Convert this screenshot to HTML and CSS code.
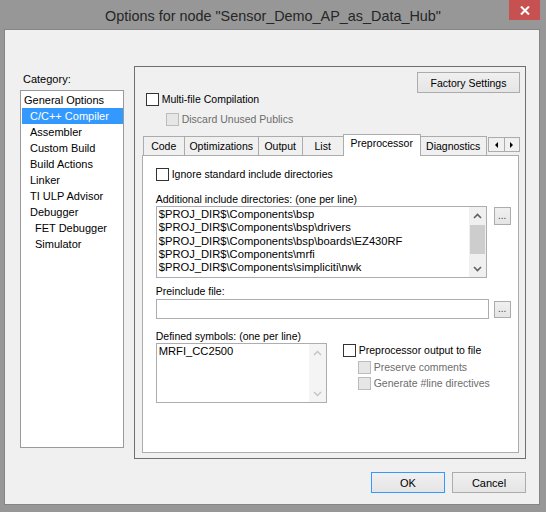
FILE: index.html
```html
<!DOCTYPE html>
<html>
<head>
<meta charset="utf-8">
<link rel="stylesheet" href="styles.css">
</head>
<body>
<div class="window">
  <div class="titlebar">
    <div class="title">Options for node "Sensor_Demo_AP_as_Data_Hub"</div>
    <div class="close"><svg width="10" height="9" viewBox="0 0 10 9"><path d="M1 0.5 L9 8.5 M9 0.5 L1 8.5" stroke="#fff" stroke-width="2"/></svg></div>
  </div>
  <div class="client">
    <div class="main">
      <div class="catcol">
        <div class="catlabel">Category:</div>
        <div class="catlist">
          <div class="item">General Options</div>
          <div class="item l1 sel">C/C++ Compiler</div>
          <div class="item l1">Assembler</div>
          <div class="item l1">Custom Build</div>
          <div class="item l1">Build Actions</div>
          <div class="item l1">Linker</div>
          <div class="item l1">TI ULP Advisor</div>
          <div class="item l1">Debugger</div>
          <div class="item l2">FET Debugger</div>
          <div class="item l2">Simulator</div>
        </div>
      </div>
      <div class="panel">
        <div class="factory-row"><div class="btn factory">Factory Settings</div></div>
        <div class="chk multi"><span class="box"></span><span>Multi-file Compilation</span></div>
        <div class="chk discard disabled"><span class="box"></span><span>Discard Unused Publics</span></div>
        <div class="tabstrip">
          <div class="tab w-code">Code</div>
          <div class="tab w-opt">Optimizations</div>
          <div class="tab w-out">Output</div>
          <div class="tab w-list">List</div>
          <div class="tab sel w-pre">Preprocessor</div>
          <div class="tab w-diag">Diagnostics</div>
          <div class="tabarrows">
            <div class="arr"><span class="tri-l"></span></div>
            <div class="arr"><span class="tri-r"></span></div>
          </div>
        </div>
        <div class="tabpage">
          <div class="chk ignore"><span class="box"></span><span>Ignore standard include directories</span></div>
          <div class="label lbl-incl">Additional include directories: (one per line)</div>
          <div class="inclrow">
            <div class="listbox incl">
              <div class="lines">
                <div>$PROJ_DIR$\Components\bsp</div>
                <div>$PROJ_DIR$\Components\bsp\drivers</div>
                <div>$PROJ_DIR$\Components\bsp\boards\EZ430RF</div>
                <div>$PROJ_DIR$\Components\mrfi</div>
                <div>$PROJ_DIR$\Components\simpliciti\nwk</div>
              </div>
              <div class="scroll">
                <div class="sbtn"><svg width="9" height="6" viewBox="0 0 9 6"><path d="M1 5 L4.5 1.5 L8 5" fill="none" stroke="#606060" stroke-width="1.6"/></svg></div>
                <div class="thumb"></div>
                <div class="sfill"></div>
                <div class="sbtn"><svg width="9" height="6" viewBox="0 0 9 6"><path d="M1 1 L4.5 4.5 L8 1" fill="none" stroke="#606060" stroke-width="1.6"/></svg></div>
              </div>
            </div>
            <div class="btn dots d1">...</div>
          </div>
          <div class="label lbl-pre">Preinclude file:</div>
          <div class="prerow">
            <div class="field"></div>
            <div class="btn dots d2">...</div>
          </div>
          <div class="label lbl-def">Defined symbols: (one per line)</div>
          <div class="symrow">
            <div class="listbox sym">
              <div class="lines"><div>MRFI_CC2500</div></div>
              <div class="scroll off">
                <div class="sbtn"><svg width="9" height="6" viewBox="0 0 9 6"><path d="M1 5 L4.5 1.5 L8 5" fill="none" stroke="#c4c4c4" stroke-width="1.4"/></svg></div>
                <div class="sfill"></div>
                <div class="sbtn"><svg width="9" height="6" viewBox="0 0 9 6"><path d="M1 1 L4.5 4.5 L8 1" fill="none" stroke="#c4c4c4" stroke-width="1.4"/></svg></div>
              </div>
            </div>
            <div class="ppopts">
              <div class="chk ppout"><span class="box"></span><span>Preprocessor output to file</span></div>
              <div class="chk disabled preserve"><span class="box"></span><span>Preserve comments</span></div>
              <div class="chk disabled genline"><span class="box"></span><span>Generate #line directives</span></div>
            </div>
          </div>
        </div>
      </div>
    </div>
    <div class="buttons">
      <div class="btn ok">OK</div>
      <div class="btn cancel">Cancel</div>
    </div>
  </div>
</div>
</body>
</html>
```

FILE: styles.css
```css
body {
  margin: 0;
  background: #979797;
  font-family: "Liberation Sans", Arial, sans-serif;
}
.window {
  width: 546px;
  height: 512px;
}
.titlebar {
  height: 29px;
  display: flex;
  align-items: flex-start;
}
.title {
  flex: 1;
  padding-left: 37px;
  padding-top: 6px;
  line-height: 20px;
  font-size: 14.4px;
  color: #262626;
  text-align: center;
  white-space: nowrap;
}
.close {
  width: 31px;
  height: 20px;
  margin-right: 6px;
  background: #c75050;
  display: flex;
  align-items: center;
  justify-content: center;
}
.client {
  margin-left: 4px;
  width: 536px;
  height: 476px;
  box-sizing: border-box;
  border: 1px solid #858585;
  background: #f0f0f0;
  padding: 36px 13px 0 15px;
  display: flex;
  flex-direction: column;
  font-size: 10.5px;
  color: #000;
}
.main {
  display: flex;
  gap: 10px;
  align-items: flex-start;
}
.catcol {
  width: 105px;
}
.catlabel {
  padding-top: 6px;
  height: 14px;
  line-height: 14px;
  margin-bottom: 4px;
  font-size: 11px;
  padding-left: 3px;
}
.catlist {
  height: 358px;
  box-sizing: border-box;
  border: 1px solid #9a9a9a;
  background: #fff;
  padding-top: 1px;
}
.item {
  height: 16px;
  line-height: 16px;
  margin-left: 1px;
  padding-left: 2px;
  font-size: 11px;
  white-space: nowrap;
}
.item.l1 { padding-left: 8px; }
.item.l2 { padding-left: 13px; }
.item.sel {
  background: #3399ff;
  color: #fff;
}
.panel {
  width: 397px;
  height: 393px;
  box-sizing: border-box;
  border: 1px solid #6f6f6f;
  padding: 5px 5px 5px 7px;
  display: flex;
  flex-direction: column;
}
.factory-row {
  display: flex;
  justify-content: flex-end;
}
.btn {
  box-sizing: border-box;
  height: 21px;
  border: 1px solid #acacac;
  background: linear-gradient(#f0f0f0, #e5e5e5);
  display: flex;
  align-items: center;
  justify-content: center;
  font-size: 10.5px;
  color: #000;
  white-space: nowrap;
}
.factory { width: 103px; }
.chk {
  display: flex;
  align-items: center;
  height: 13px;
  line-height: 13px;
  white-space: nowrap;
}
.box {
  width: 13px;
  height: 13px;
  box-sizing: border-box;
  border: 1px solid #333;
  background: #fff;
  margin-right: 3px;
  flex: none;
}
.disabled { color: #6d6d6d; }
.disabled .box {
  border-color: #bcbcbc;
  background: #e6e6e6;
}
.multi { margin-left: 4px; }
.discard { margin-left: 24px; margin-top: 7px; }
.tabstrip {
  display: flex;
  align-items: flex-end;
  height: 21px;
  margin-top: 8px;
  padding-left: 1px;
}
.tab {
  height: 19px;
  box-sizing: border-box;
  border: 1px solid #acacac;
  border-bottom: none;
  margin-right: -1px;
  text-align: center;
  line-height: 18px;
  background: #f0f0f0;
  white-space: nowrap;
  flex: none;
}
.tab.sel {
  height: 22px;
  margin-bottom: -1px;
  background: #fff;
  position: relative;
  z-index: 2;
  line-height: 17px;
}
.w-code { width: 42px; }
.w-opt { width: 75px; }
.w-out { width: 45px; }
.w-list { width: 42px; }
.w-pre { width: 78px; }
.w-diag { width: 67px; }
.tabarrows {
  margin-left: auto;
  align-self: flex-start;
  margin-top: 3px;
  width: 32px;
  height: 15px;
  box-sizing: border-box;
  border: 1px solid #acacac;
  background: #f0f0f0;
  display: flex;
}
.arr {
  flex: 1;
  display: flex;
  align-items: center;
  justify-content: center;
}
.arr + .arr { border-left: 1px solid #acacac; }
.tri-l {
  width: 0; height: 0;
  border-top: 3px solid transparent;
  border-bottom: 3px solid transparent;
  border-right: 3px solid #000;
}
.tri-r {
  width: 0; height: 0;
  border-top: 3px solid transparent;
  border-bottom: 3px solid transparent;
  border-left: 3px solid #000;
}
.tabpage {
  flex: 1;
  margin-right: 1px;
  border: 1px solid #acacac;
  background: #fff;
  padding: 12px 0 0 13px;
  display: flex;
  flex-direction: column;
}
.label {
  height: 14px;
  line-height: 14px;
  white-space: nowrap;
}
.lbl-incl { margin-top: 11px; }
.lbl-pre { margin-top: 6px; }
.lbl-def { margin-top: 10px; }
.inclrow {
  display: flex;
  gap: 7px;
  align-items: flex-start;
}
.listbox {
  box-sizing: border-box;
  border: 1px solid #abadb3;
  background: #fff;
  display: flex;
}
.listbox.incl { width: 331px; height: 72px; }
.listbox.sym { width: 171px; height: 60px; }
.lines {
  flex: 1;
  padding: 1px 0 0 2px;
  font-size: 11.2px;
  line-height: 13.3px;
  white-space: nowrap;
  overflow: hidden;
}
.scroll {
  width: 17px;
  background: #f0f0f0;
  display: flex;
  flex-direction: column;
}
.scroll.off { background: #f4f4f4; }
.sbtn {
  height: 17px;
  display: flex;
  align-items: center;
  justify-content: center;
}
.thumb {
  height: 29px;
  margin: 1px 1px 0 1px;
  background: #cdcdcd;
}
.sfill { flex: 1; }
.dots {
  width: 17px;
  font-size: 10px;
  color: #444;
  align-items: flex-end;
  padding-bottom: 3px;
}
.d1 { height: 18px; margin-top: 1px; }
.d2 { height: 17px; margin-top: 2px; }
.prerow {
  display: flex;
  gap: 5px;
  align-items: flex-start;
  margin-top: 1px;
}
.field {
  width: 333px;
  height: 20px;
  box-sizing: border-box;
  border: 1px solid #abadb3;
  background: #fff;
}
.symrow {
  display: flex;
  align-items: flex-start;
}
.ppopts {
  margin-left: 16px;
  display: flex;
  flex-direction: column;
}
.ppout { margin-top: 1px; }
.preserve { margin-left: 15px; margin-top: 4px; }
.genline { margin-left: 15px; margin-top: 3px; }
.buttons {
  display: flex;
  justify-content: flex-end;
  gap: 7px;
  margin-top: 13px;
}
.ok, .cancel { width: 74px; font-size: 11px; }
.ok { border-color: #3399ff; }
```
